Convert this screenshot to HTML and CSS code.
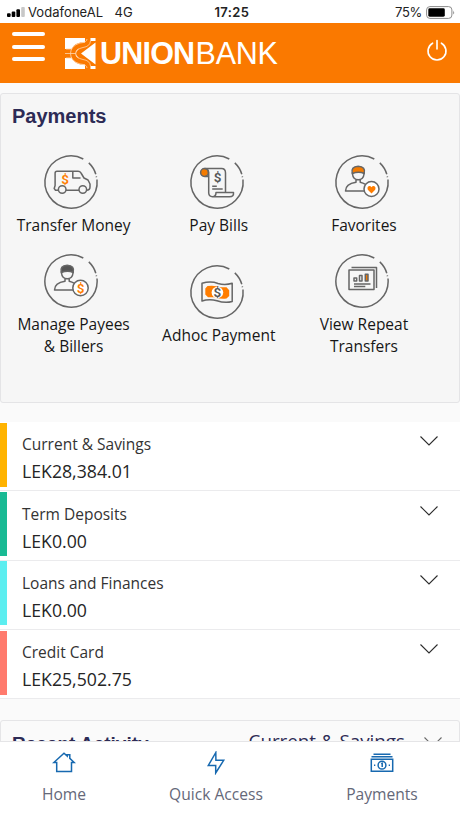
FILE: index.html
```html
<!DOCTYPE html>
<html lang="en">
<head>
<meta charset="utf-8">
<title>Union Bank</title>
<link rel="stylesheet" href="styles.css">
</head>
<body>
<svg class="defs" width="0" height="0" aria-hidden="true">
  <symbol id="ring" viewBox="-30 -30 60 60">
    <path d="M26 -2.500A26.100 26.100 0 1 1 12.300 -23M17.800 -19.100A26.100 26.100 0 0 1 24.800 -7.800M25.300 -5.600L25.500 -4.800"/>
  </symbol>
  <symbol id="chevron" viewBox="0 0 20 12"><path d="M1.500 1.500L10 10L18.500 1.500" fill="none" stroke="#2c2c2c" stroke-width="1.1"/></symbol>
</svg>
<div class="status">
  <svg class="signal" width="19" height="10" viewBox="0 0 19 10"><rect x="0" y="6.200" width="3.600" height="3.800" rx="1"/><rect x="4.700" y="4.500" width="3.600" height="5.500" rx="1"/><rect x="9.400" y="2.200" width="3.600" height="7.800" rx="1"/><rect x="14.200" y="0" width="3.600" height="10" rx="1" fill="#c8c8c8"/></svg>
  <span class="carrier">VodafoneAL</span><span class="network">4G</span>
  <span class="clock">17:25</span>
  <span class="percent">75%</span>
  <svg class="battery" width="29" height="13" viewBox="0 0 29 13"><rect x=".6" y=".6" width="25.300" height="11.800" rx="3.300" fill="#fff" stroke="#8b8b8b" stroke-width="1"/><rect x="2.300" y="2.300" width="16.500" height="8.400" rx="1.400"/><path d="M27.200 4.500Q29 6.500 27.200 8.500Z" fill="#8b8b8b"/></svg>
</div>
<header class="header">
  <div class="menu"><i></i><i></i><i></i></div>
  <svg class="mark" width="32" height="32" viewBox="0 0 32 32">
    <path fill="#fff" d="M0 0H20V5L15 9L10 15.500L15 22L20 26V31H0ZM16 15.500L30.500 4.500V26.500ZM26 0H30.500V3H26ZM26 28H30.500V31H26Z"/>
    <path fill="#fa7900" d="M0 11H6V20H0Z"/>
    <path fill="none" stroke="#fa7900" stroke-width="5" d="M22 7H16Q8 9 8 15.500Q8 22 16 24H22"/>
    <path fill="none" stroke="#ffd5ad" stroke-width=".8" d="M0 15.500H11M6 11H1M6 20H1M25.500 0V3Q25 8.500 18 9.500Q10.800 11 10.800 15.500Q10.800 20 18 21.500Q25 22.500 25.500 28V31M22 1Q22 4.500 15 5Q5.500 8 5.500 15.500Q5.500 23 15 26Q22 26.500 22 30"/>
  </svg>
  <div class="brand"><b>UNION</b><span>BANK</span></div>
  <svg class="power" width="22" height="24" viewBox="0 0 22 24"><path d="M6.600 4.200A9 9 0 1 0 15.400 4.200M11 1.500V10" fill="none" stroke="#fff" stroke-width="1.600" stroke-linecap="round"/></svg>
</header>
<main>
  <section class="payments">
    <h2>Payments</h2>
    <div class="tiles">
      <div class="tile">
        <svg class="icon" viewBox="-30 -30 60 60"><use href="#ring" x="-30" y="-30" width="60" height="60"/><path d="M-12.700 8.200H-15.500L-16.800 6.500L-15.900 3.500V-9Q-15.900 -10.800 -14 -10.800H7Q9 -10.800 10 -9L13 -4L17 -2L19 2V5Q19 8.200 15.500 8.200M-5 8.200H8M1.800 -10.500V-4H9.500"/><circle cx="-8.800" cy="7.500" r="3.800"/><circle cx="11.800" cy="7.500" r="3.800"/><text class="cash" x="-6" y="1.500">$</text></svg>
        <p>Transfer Money</p>
      </div>
      <div class="tile">
        <svg class="icon" viewBox="-30 -30 60 60"><use href="#ring" x="-30" y="-30" width="60" height="60"/><circle class="hot" cx="-12.500" cy="-9.500" r="3.900"/><path d="M-12.500 -13.400H4.500Q8.500 -13.400 8.500 -9V10.300M-12.500 -13.400Q-8.300 -13 -8.300 -9V11Q-8 14.700 -4.500 14.700M-12 -5.600H-8.300M-4.500 14.700Q-1 14.700 -1 10.500H16.500Q17 14.700 12.500 14.700ZM-4.800 4.300H-.2M-4.800 6.900H5.700"/><text class="gray" x=".5" y="0">$</text></svg>
        <p>Pay Bills</p>
      </div>
      <div class="tile">
        <svg class="icon" viewBox="-30 -30 60 60"><use href="#ring" x="-30" y="-30" width="60" height="60"/><path d="M-9.500 -10V-8Q-9 -2.300 -3.800 -2.300Q1.500 -2.300 2 -8V-10M-6 -3V.3Q-16.500 2 -16.500 9H3M-1.800 -3V.3Q1 1 3.500 2.300"/><path class="hot" d="M-9.700 -8.500Q-11.500 -15.500 -3.800 -15.800Q4 -15.500 2.200 -8.500Q-3 -10.800 -9.700 -8.500Z"/><circle class="badge" cx="9.500" cy="7" r="7.500"/><path class="heart" d="M9.500 11.500L5.800 7.700Q4.800 4.500 7.200 4Q8.800 3.900 9.500 5.300Q10.200 3.900 11.800 4Q14.200 4.500 13.200 7.700Z"/></svg>
        <p>Favorites</p>
      </div>
      <div class="tile">
        <svg class="icon" viewBox="-30 -30 60 60"><use href="#ring" x="-30" y="-30" width="60" height="60"/><path d="M-9.500 -10V-8Q-9 -2.300 -3.800 -2.300Q1.500 -2.300 2 -8V-10M-6 -3V.3Q-16.500 2 -16.500 9H3M-1.800 -3V.3Q1 1 3.500 2.300"/><path class="dark" d="M-9.700 -8.500Q-11.500 -15.500 -3.800 -15.800Q4 -15.500 2.200 -8.500Q-3 -10.800 -9.700 -8.500Z"/><circle class="badge" cx="9.500" cy="7" r="7.700"/><text class="cash" x="9.500" y="11.800">$</text></svg>
        <p>Manage Payees<br>&amp; Billers</p>
      </div>
      <div class="tile middle">
        <svg class="icon" viewBox="-30 -30 60 60"><use href="#ring" x="-30" y="-30" width="60" height="60"/><path d="M-15 -8.800Q-6 -11.200 1 -8.500Q8 -6.500 15.200 -8.700V9.500Q8 11.500 0 8.700Q-8 6.500 -15 9Z"/><path class="plain" d="M-9.500 -6Q-2 -7 3 -4.700H9.500L12.200 -1.800V4L9.500 6.500Q4 7.500 -1.500 5.300H-9L-11.700 2.500V-3.500Z"/><circle class="pale" cx=".4" cy=".5" r="5.800"/><text class="gray" x=".4" y="5">$</text></svg>
        <p>Adhoc Payment</p>
      </div>
      <div class="tile">
        <svg class="icon" viewBox="-30 -30 60 60"><use href="#ring" x="-30" y="-30" width="60" height="60"/><path d="M-13 -11H12V8.500H-13ZM-10.500 -13.400H14.500V7M-8 3H8.500M-8 5.600H3.300M-8 -3H-5.300V0H-8ZM-2.500 -5.500H0V0H-2.500Z"/><path class="hot" d="M3.300 -6.700H6V0H3.300Z"/></svg>
        <p>View Repeat<br>Transfers</p>
      </div>
    </div>
  </section>
  <section class="accounts">
    <div class="account gold"><div><h3>Current &amp; Savings</h3><p>LEK28,384.01</p></div><svg width="20" height="12"><use href="#chevron"/></svg></div>
    <div class="account green"><div><h3>Term Deposits</h3><p>LEK0.00</p></div><svg width="20" height="12"><use href="#chevron"/></svg></div>
    <div class="account cyan"><div><h3>Loans and Finances</h3><p>LEK0.00</p></div><svg width="20" height="12"><use href="#chevron"/></svg></div>
    <div class="account coral"><div><h3>Credit Card</h3><p>LEK25,502.75</p></div><svg width="20" height="12"><use href="#chevron"/></svg></div>
  </section>
  <section class="recent"><h2>Recent Activity</h2><span>Current &amp; Savings</span><svg width="20" height="12"><use href="#chevron"/></svg></section>
</main>
<nav class="tabs">
  <div class="home"><svg width="24" height="24" viewBox="0 0 24 24"><path d="M4.500 11.500H1.800L12 2.200L15.200 5V3.800H17.800V7.400L22.200 11.500H19.500V20.500H4.700V11.500Z"/></svg><span>Home</span></div>
  <div class="quick"><svg width="24" height="24" viewBox="0 0 24 24"><path d="M11.800 1.500L4.300 14.500H11.700V22L19.700 9.300H11.900Z"/></svg><span>Quick Access</span></div>
  <div class="pay"><svg width="24" height="24" viewBox="0 0 24 24"><path d="M1.300 8.200H22.700V20.300H1.300ZM1.500 5.700H22.500M3.500 3.200H20.500"/><circle cx="12" cy="14.200" r="3.900"/><path d="M11.200 12.800L12.200 12.400V16M4 14.200H5.300M18.700 14.200H20"/></svg><span>Payments</span></div>
</nav>
</body>
</html>
```
FILE: styles.css
```css
* { box-sizing: border-box; }
body {
  margin: 0;
  width: 460px;
  height: 818px;
  overflow: hidden;
  display: flex;
  flex-direction: column;
  background: #fafafa;
  font-family: "Open Sans", "Noto Sans", sans-serif;
  color: #161616;
}
h2, h3, p { margin: 0; font-weight: 400; }
.defs { position: absolute; }
svg { display: block; flex: none; }

.status {
  flex: none;
  height: 22.500px;
  display: flex;
  align-items: center;
  padding: 2px 5px 0 7px;
  background: #fff;
  color: #222;
  font: 13px/20px Inter, sans-serif;
  white-space: nowrap;
}
.carrier { width: 88.500px; padding-left: 2px; letter-spacing: .05px; }
.network { width: 100px; }
.clock { flex: 1; font-weight: 600; letter-spacing: .35px; }
.percent { letter-spacing: -.3px; }
.battery { margin-left: 4px; }

.header {
  flex: none;
  height: 60px;
  display: flex;
  align-items: flex-start;
  background: #fa7900;
  padding: 0 12px;
  color: #fff;
}
.menu { width: 33px; padding-top: 9.500px; display: grid; gap: 8.600px; }
.menu i { height: 4px; border-radius: 2px; background: #fff; }
.mark { margin: 15.500px 0 0 20px; }
.brand {
  margin: 13.500px 0 0 3px;
  flex: 1;
  display: flex;
  font: 30.500px/34px "Liberation Sans", Arial, sans-serif;
}
.brand b { width: 95.500px; letter-spacing: -.8px; }
.brand span { letter-spacing: -.2px; }
.power { margin: 16px 0 0; }

main { flex: 1; min-height: 0; overflow: hidden; }
.payments {
  height: 309.500px;
  margin-top: 10.500px;
  border: 1px solid #e4e4e6;
  border-radius: 3px;
  background: #f6f6f6;
}
h2 { color: #2d2b55; font: bold 20px/24px "Liberation Sans", Arial, sans-serif; }
.payments h2 { padding: 10px 11px 0; }
.tiles { display: grid; grid-template-columns: repeat(3, 145.200px); grid-template-rows: 98.500px 110px; margin-top: 23px; }
.tile { padding-top: 2px; text-align: center; font-size: 15.500px; line-height: 22px; white-space: nowrap; }
.middle { padding-top: 13px; }
.icon {
  width: 60px;
  height: 60px;
  margin: -1px 0 0 40.400px;
  fill: none;
  stroke: #666;
  stroke-width: 1.500;
  stroke-linejoin: round;
}
.tile p { margin-top: 2px; }
.icon text { stroke: none; text-anchor: middle; font: 600 13.500px Roboto, sans-serif; }
.icon .cash, .icon .heart, .icon .plain { fill: #ff7d00; stroke: none; }
.icon .gray { fill: #555; }
.hot { fill: #f47b00; }
.dark { fill: #555; }
.badge { fill: #fff; }
.pale { fill: #fff; stroke: none; }

.accounts { margin-top: 19.700px; background: #fff; }
.account {
  height: 69.300px;
  display: flex;
  padding: 10.300px 21px 0 22px;
  border-bottom: 1px solid #ebebed;
  background: linear-gradient(var(--tone), var(--tone)) 0 .5px / 7px 64px no-repeat;
}
.account > div { flex: 1; }
.gold { --tone: #ffb300; }
.green { --tone: #19ba94; }
.cyan { --tone: #5ceef0; }
.coral { --tone: #ff7a6d; }
.account h3 { font-size: 15.500px; line-height: 24px; color: #333; }
.account p { font-size: 17.700px; line-height: 26px; margin-top: 2px; color: #252525; }
.account svg { margin-top: 3px; }
.recent {
  height: 60px;
  margin-top: 21px;
  border: 1px solid #e5e5e7;
  border-radius: 3px;
  display: flex;
  padding: 8px 16px 0 11px;
}
.recent h2 { flex: 1; font-size: 19px; line-height: 30px; }
.recent span { font-size: 18.800px; line-height: 24px; color: #2d2b55; margin-right: 18px; }
.recent svg { margin-top: 7px; opacity: .7; }

.tabs {
  flex: none;
  height: 77px;
  border-top: 1px solid #e5e5e7;
  background: #fff;
  color: #656879;
  font-size: 15.600px;
  line-height: 22px;
  display: grid;
  grid-template-columns: 128px 176px 156px;
}
.tabs div { display: flex; flex-direction: column; align-items: center; padding-top: 9px; gap: 8px; }
.tabs svg { fill: none; stroke: #1769b0; stroke-width: 1.500; }
```
